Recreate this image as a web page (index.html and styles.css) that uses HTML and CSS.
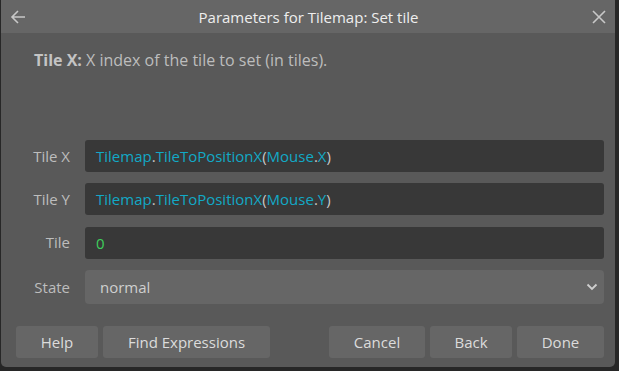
FILE: index.html
```html
<!DOCTYPE html>
<html lang="en">
<head>
	<meta charset="UTF-8">
	<title>Parameters for Tilemap: Set tile</title>
	<link rel="stylesheet" href="styles.css">
</head>
<body>
	<div class="dialog">
		<div class="titlebar">
			<span class="icon">
				<svg width="18" height="18" viewBox="0 0 18 18"><path d="M16 9H3M9 3L3 9l6 6" fill="none" stroke="#c8c8c8" stroke-width="1.6"/></svg>
			</span>
			<span class="title">Parameters for Tilemap: Set tile</span>
			<span class="icon">
				<svg width="18" height="18" viewBox="0 0 18 18"><path d="M3 3l12 12M15 3L3 15" fill="none" stroke="#c8c8c8" stroke-width="1.6"/></svg>
			</span>
		</div>
		<p class="desc"><b>Tile X:</b> X index of the tile to set (in tiles).</p>
		<div class="form">
			<label>Tile X</label>
			<div class="field"><span class="obj">Tilemap</span><span class="op">.</span><span class="fn">TileToPositionX</span><span class="op">(</span><span class="obj">Mouse</span><span class="op">.</span><span class="fn">X</span><span class="op">)</span></div>
			<label>Tile Y</label>
			<div class="field"><span class="obj">Tilemap</span><span class="op">.</span><span class="fn">TileToPositionX</span><span class="op">(</span><span class="obj">Mouse</span><span class="op">.</span><span class="fn">Y</span><span class="op">)</span></div>
			<label>Tile</label>
			<div class="field"><span class="num">0</span></div>
			<label class="tall">State</label>
			<div class="select">
				<span>normal</span>
				<svg width="12" height="8" viewBox="0 0 12 8"><path d="M1.5 1.5L6 6l4.5-4.5" fill="none" stroke="#cfcfcf" stroke-width="1.8"/></svg>
			</div>
		</div>
		<div class="footer">
			<button>Help</button>
			<button class="wide">Find Expressions</button>
			<span class="spacer"></span>
			<button class="cancel">Cancel</button>
			<button>Back</button>
			<button class="done">Done</button>
		</div>
	</div>
</body>
</html>
```

FILE: styles.css
```css
*{margin: 0;padding: 0;box-sizing: border-box;}
body{
	background: #272727;
	font-family: "Open Sans", "Noto Sans", sans-serif;
	width: 619px;
	height: 371px;
	overflow: hidden;
}
.dialog{
	margin-left: 1px;
	width: 614px;
	height: 367px;
	background: #595959;
	border-radius: 0 0 5px 5px;
	display: flex;
	flex-direction: column;
}
.titlebar{
	height: 33px;
	background: #666666;
	display: flex;
	align-items: center;
	justify-content: space-between;
	padding: 0 7px 0 8px;
}
.icon{
	width: 18px;
	height: 18px;
	display: flex;
}
.title{
	color: #eeeeee;
	font-size: 15px;
}
.desc{
	padding: 16px 0 0 33px;
	color: #bdbdbd;
	font-size: 16px;
	line-height: 22px;
}
.desc b{color: #c4c4c4;}
.form{
	margin-top: auto;
	display: grid;
	grid-template-columns: 54px 1fr;
	column-gap: 15px;
	row-gap: 11px;
	padding: 0 11px 0 15px;
}
.form label{
	color: #bdbdbd;
	font-size: 15px;
	text-align: right;
	line-height: 32px;
}
.form label.tall{line-height: 34px;}
.field{
	height: 32px;
	background: #383838;
	border-radius: 3px;
	padding-left: 11px;
	font-size: 15px;
	line-height: 32px;
	white-space: nowrap;
}
.field:nth-of-type(3){margin-top: 1px;}
.obj, .fn{color: #12a9c6;}
.op{color: #c8c8c8;}
.num{color: #3ecf5c;}
.select{
	height: 34px;
	background: #666666;
	border-radius: 4px;
	display: flex;
	align-items: center;
	justify-content: space-between;
	padding: 0 6px 0 15px;
	color: #cfcfcf;
	font-size: 15px;
}
.footer{
	display: flex;
	gap: 5px;
	padding: 22px 11px 9px 15px;
}
.spacer{flex: 1;}
button{
	height: 32px;
	width: 82px;
	background: #666666;
	border: none;
	border-radius: 3px;
	color: #dcdcdc;
	font-family: inherit;
	font-size: 15px;
}
button.wide{width: 167px;}
button.cancel{width: 96px;}
button.done{width: 87px;}
```
